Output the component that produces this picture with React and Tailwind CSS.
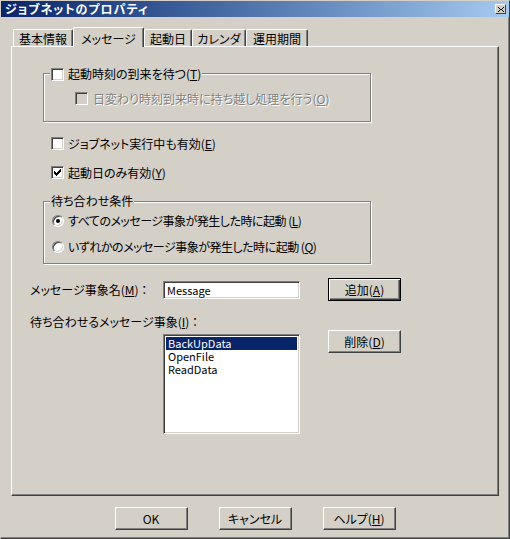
import React from "react";

const Check = ({ checked, disabled }) => (
  <span
    className={`relative inline-block w-[13px] h-[13px] shrink-0 border border-t-[#808080] border-l-[#808080] border-r-white border-b-white shadow-[inset_1px_1px_0_#404040,inset_-1px_-1px_0_#d4d0c8] ${
      disabled ? "bg-[#d4d0c8]" : "bg-white"
    }`}
  >
    {checked && (
      <svg className="absolute left-[2px] top-[2px]" width="7" height="7" viewBox="0 0 7 7" shapeRendering="crispEdges">
        <path d="M6 0h1v3h-1v1h-1v1h-1v1h-1v1h-1v-1h-1v-1h-1v-3h1v1h1v1h1v-1h1v-1h1v-1h1z" fill="#000" />
      </svg>
    )}
  </span>
);

const Radio = ({ checked }) => (
  <span className="relative inline-block w-[12px] h-[12px] shrink-0 rounded-full border border-t-[#808080] border-l-[#808080] border-r-white border-b-white bg-white shadow-[inset_1px_1px_0_#404040,inset_-1px_-1px_0_#d4d0c8]">
    {checked && <span className="absolute left-[3px] top-[3px] w-[4px] h-[4px] rounded-full bg-black" />}
  </span>
);

const Button = ({ children, isDefault }) => (
  <button
    type="button"
    className={`w-[73px] h-[23px] flex items-center justify-center bg-[#d4d0c8] text-black text-[12px] leading-[14px] ${
      isDefault
        ? "border border-black shadow-[inset_1px_1px_0_#fff,inset_-1px_-1px_0_#404040,inset_-2px_-2px_0_#808080]"
        : "border border-t-white border-l-white border-r-[#404040] border-b-[#404040] shadow-[inset_-1px_-1px_0_#808080]"
    }`}
  >
    {children}
  </button>
);

const Key = ({ k }) => (
  <>
    (<span className="underline underline-offset-[1px]">{k}</span>)
  </>
);

const tabs = [
  { label: "基本情報", w: "w-[60px]" },
  { label: "メッセージ", w: "w-[71px]", active: true },
  { label: "起動日", w: "w-[48px]" },
  { label: "カレンダ", w: "w-[54px]" },
  { label: "運用期間", w: "w-[62px]" },
];

const events = ["BackUpData", "OpenFile", "ReadData"];

export default function App() {
  return (
    <div className="w-[510px] h-[539px] flex flex-col bg-[#d4d0c8] border border-t-[#d4d0c8] border-l-[#d4d0c8] border-r-[#404040] border-b-[#404040] shadow-[inset_-1px_-1px_0_#808080] text-black text-[12px] leading-[14px] font-['MS_UI_Gothic','Noto_Sans_CJK_JP',sans-serif] [font-feature-settings:'palt'] select-none overflow-hidden">
      {/* title bar */}
      <div className="h-[16px] flex items-center justify-between pl-[4px] pr-[3px] bg-gradient-to-r from-[#0a246a] to-[#a6caf0]">
        <span className="text-white font-bold tracking-[1px]">ジョブネットのプロパティ</span>
        <span className="w-[11px] h-[10px] flex items-center justify-center bg-[#d4d0c8] border border-t-white border-l-white border-r-[#404040] border-b-[#404040]">
          <svg width="6" height="5" viewBox="0 0 6 5" shapeRendering="crispEdges">
            <path d="M0 0h1v1h1v1h2v-1h1v-1h1v1h-1v1h-1v1h1v1h1v1h-1v-1h-1v-1h-2v1h-1v1h-1v-1h1v-1h1v-1h-1v-1h-1z" fill="#000" />
          </svg>
        </span>
      </div>

      <div className="flex flex-col px-[10px] mt-[10px]">
        {/* tabs */}
        <div className="relative z-10 flex items-end pl-[2px]">
          {tabs.map((t) =>
            t.active ? (
              <div
                key={t.label}
                className={`${t.w} h-[20px] -mb-px flex justify-center pt-[4px] bg-[#d4d0c8] rounded-t-[2px] border-t border-l border-r border-t-white border-l-white border-r-[#404040] shadow-[inset_-1px_0_0_#808080]`}
              >
                {t.label}
              </div>
            ) : (
              <div
                key={t.label}
                className={`${t.w} h-[17px] flex justify-center pt-[2px] rounded-t-[2px] border-t border-l border-r border-t-white border-l-white border-r-[#404040] shadow-[inset_-1px_0_0_#808080]`}
              >
                {t.label}
              </div>
            )
          )}
        </div>

        {/* tab panel */}
        <div className="h-[450px] flex flex-col border border-t-white border-l-white border-r-[#404040] border-b-[#404040] shadow-[inset_-1px_-1px_0_#808080]">
          {/* group: start time */}
          <div className="relative ml-[31px] mt-[26px] w-[328px] h-[49px] border border-[#808080] shadow-[inset_1px_1px_0_#fff,1px_1px_0_#fff]">
            <div className="absolute left-[6px] -top-[7px] flex items-center gap-[4px] px-[1px] bg-[#d4d0c8]">
              <Check />
              <span>起動時刻の到来を待つ<Key k="T" /></span>
            </div>
            <div className="flex items-center gap-[5px] ml-[31px] mt-[18px] h-[13px]">
              <Check disabled />
              <span className="text-[#808080] [text-shadow:1px_1px_0_#fff]">
                日変わり時刻到来時に持ち越し処理を行う<Key k="O" />
              </span>
            </div>
          </div>

          <div className="flex items-center gap-[4px] ml-[39px] mt-[15px] h-[13px]">
            <Check />
            <span>ジョブネット実行中も有効<Key k="E" /></span>
          </div>
          <div className="flex items-center gap-[4px] ml-[39px] mt-[16px] h-[13px]">
            <Check checked />
            <span>起動日のみ有効<Key k="Y" /></span>
          </div>

          {/* group: wait condition */}
          <div className="relative ml-[31px] mt-[22px] w-[328px] h-[63px] border border-[#808080] shadow-[inset_1px_1px_0_#fff,1px_1px_0_#fff]">
            <span className="absolute left-[6px] -top-[8px] px-[1px] bg-[#d4d0c8]">待ち合わせ条件</span>
            <div className="flex items-center gap-[4px] ml-[8px] mt-[12px] h-[13px]">
              <Radio checked />
              <span className="tracking-[-0.5px]">すべてのメッセージ事象が発生した時に起動 <Key k="L" /></span>
            </div>
            <div className="flex items-center gap-[4px] ml-[8px] mt-[13px] h-[13px]">
              <Radio />
              <span className="tracking-[-0.5px]">いずれかのメッセージ事象が発生した時に起動 <Key k="Q" /></span>
            </div>
          </div>

          {/* event name */}
          <div className="flex items-center ml-[18px] mt-[14px] h-[23px]">
            <span className="w-[133px]">メッセージ事象名<Key k="M" /> ：</span>
            <div className="w-[137px] h-[18px] flex items-center pl-[3px] text-[11px] bg-white border border-t-[#808080] border-l-[#808080] border-r-white border-b-white shadow-[inset_1px_1px_0_#404040,inset_-1px_-1px_0_#d4d0c8]">
              Message
            </div>
            <div className="ml-[28px]">
              <Button isDefault>
                追加<Key k="A" />
              </Button>
            </div>
          </div>

          <div className="ml-[18px] mt-[14px]">
            待ち合わせるメッセージ事象<Key k="I" /> ：
          </div>

          <div className="flex items-start ml-[151px] mt-[1px]">
            <div className="mt-[4px] w-[137px] h-[100px] flex flex-col p-[2px] bg-white border border-t-[#808080] border-l-[#808080] border-r-white border-b-white shadow-[inset_1px_1px_0_#404040,inset_-1px_-1px_0_#d4d0c8]">
              {events.map((e, i) => (
                <div
                  key={e}
                  className={`h-[13px] leading-[13px] text-[11px] pl-[2px] ${i === 0 ? "bg-[#0a246a] text-white" : ""}`}
                >
                  {e}
                </div>
              ))}
            </div>
            <div className="ml-[28px]">
              <Button>
                削除<Key k="D" />
              </Button>
            </div>
          </div>
        </div>

        {/* dialog buttons */}
        <div className="flex justify-center gap-[31px] mt-[11px]">
          <Button>OK</Button>
          <Button>キャンセル</Button>
          <Button>
            ヘルプ<Key k="H" />
          </Button>
        </div>
      </div>
    </div>
  );
}
